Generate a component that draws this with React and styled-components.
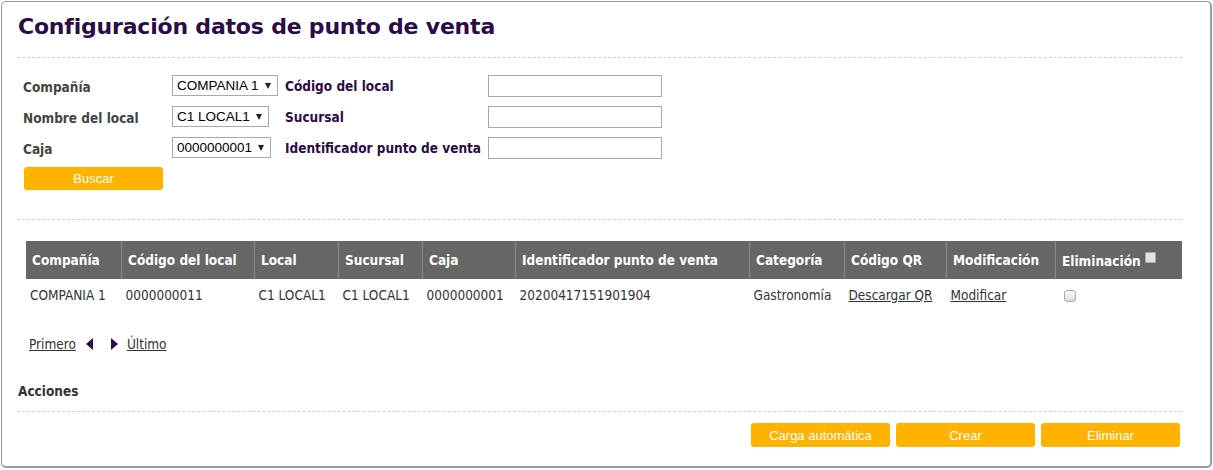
import React from "react";
import styled, { createGlobalStyle } from "styled-components";

const Global = createGlobalStyle`
  html, body {
    margin: 0;
    padding: 0;
    background: #fff;
  }
  body {
    font-family: "DejaVu Sans Condensed", "DejaVu Sans", sans-serif;
    font-size: 13.5px;
    color: #333;
  }
`;

const Panel = styled.div`
  margin: 1px 0 0 1px;
  width: 1211px;
  height: 467px;
  box-sizing: border-box;
  border: 1px solid #9a9a9a;
  border-right-width: 2px;
  border-bottom-width: 2px;
  border-radius: 5px;
  padding: 0 28px 0 15px;
  display: flex;
  flex-direction: column;
`;

const Title = styled.h1`
  margin: 0;
  padding: 12px 0 0 1px;
  height: 55px;
  box-sizing: border-box;
  font-family: "DejaVu Sans", sans-serif;
  font-size: 22px;
  font-weight: bold;
  color: #2c0b47;
  letter-spacing: -0.2px;
`;

const Divider = styled.div`
  border-top: 1px dashed #cfcfcf;
`;

const Form = styled.div`
  display: grid;
  grid-template-columns: 149px 113px 203px 174px;
  grid-auto-rows: 31px;
  align-items: center;
  padding: 12px 0 0 6px;
`;

const Label = styled.label`
  font-weight: bold;
  color: ${(p) => (p.$purple ? "#2c0b47" : "#444")};
  padding-top: ${(p) => (p.$purple ? 0 : 2)}px;
`;

const SelectBox = styled.div`
  justify-self: start;
  display: inline-flex;
  align-items: center;
  gap: 6px;
  height: 21px;
  box-sizing: border-box;
  border: 1px solid #a9a9a9;
  padding: 0 6px 0 4px;
  font-family: "Liberation Sans", Arial, sans-serif;
  font-size: 13.5px;
  color: #000;
  background: #fff;

  &::after {
    content: "";
    border-left: 3.5px solid transparent;
    border-right: 3.5px solid transparent;
    border-top: 6px solid #222;
  }
`;

const TextInput = styled.input`
  width: 174px;
  height: 22px;
  box-sizing: border-box;
  border: 1px solid #a9a9a9;
  padding: 0 4px;
`;

const OrangeButton = styled.button`
  width: ${(p) => p.$w || 139}px;
  height: ${(p) => p.$h || 24}px;
  background: #ffb300;
  border: none;
  border-radius: 3px;
  color: #fff;
  font-family: "Liberation Sans", Arial, sans-serif;
  font-size: 13px;
  padding: 0;
  cursor: pointer;
`;

const SearchRow = styled.div`
  padding: 4px 0 0 7px;
  height: 52px;
`;

const TableWrap = styled.div`
  padding: 21px 0 0 9px;
`;

const Table = styled.table`
  border-collapse: collapse;
  width: 1156px;
  th {
    background: #666;
    color: #fff;
    font-weight: bold;
    text-align: left;
    height: 38px;
    padding: 0 0 0 6px;
    border-left: 1px solid #8a8a8a;
    white-space: nowrap;
  }
  th:first-child {
    border-left: none;
  }
  td {
    height: 32px;
    padding: 0 0 0 4px;
    color: #333;
    white-space: nowrap;
  }
`;

const Check = styled.span`
  display: inline-block;
  width: ${(p) => p.$size || 12}px;
  height: ${(p) => p.$size || 12}px;
  box-sizing: border-box;
  border: 1px solid #aaa;
  border-radius: ${(p) => (p.$head ? 1 : 3)}px;
  background: ${(p) => (p.$head ? "#e2e2e2" : "linear-gradient(#fcfcfc, #dcdcdc)")};
  vertical-align: ${(p) => (p.$head ? "3px" : "-2px")};
  margin-left: 4px;
`;

const Link = styled.a`
  color: #333;
  text-decoration: underline;
`;

const Pager = styled.div`
  display: flex;
  align-items: center;
  gap: 9px;
  padding: 25px 0 0 12px;
  height: 40px;
  box-sizing: border-box;
`;

const Arrow = styled.span`
  width: 0;
  height: 0;
  border-top: 6px solid transparent;
  border-bottom: 6px solid transparent;
  ${(p) =>
    p.$left
      ? "border-right: 7px solid #2c0b47; margin: 0 9px 0 1px;"
      : "border-left: 7px solid #2c0b47;"}
`;

const SectionTitle = styled.div`
  font-weight: bold;
  color: #333;
  padding: 32px 0 0 1px;
  height: 60px;
  box-sizing: border-box;
`;

const Actions = styled.div`
  display: flex;
  justify-content: flex-end;
  gap: 6px;
  padding: 11px 2px 0 0;
`;

export default function App() {
  const rows = [
    ["COMPANIA 1", "0000000011", "C1 LOCAL1", "C1 LOCAL1", "0000000001", "20200417151901904", "Gastronomía"],
  ];
  return (
    <>
      <Global />
      <Panel>
        <Title>Configuración datos de punto de venta</Title>
        <Divider />
        <Form>
          <Label>Compañía</Label>
          <SelectBox>COMPANIA 1</SelectBox>
          <Label $purple>Código del local</Label>
          <TextInput />
          <Label>Nombre del local</Label>
          <SelectBox>C1 LOCAL1</SelectBox>
          <Label $purple>Sucursal</Label>
          <TextInput />
          <Label>Caja</Label>
          <SelectBox>0000000001</SelectBox>
          <Label $purple>Identificador punto de venta</Label>
          <TextInput />
        </Form>
        <SearchRow>
          <OrangeButton $h={23}>Buscar</OrangeButton>
        </SearchRow>
        <Divider />
        <TableWrap>
          <Table>
            <thead>
              <tr>
                <th style={{ width: 89 }}>Compañía</th>
                <th style={{ width: 126 }}>Código del local</th>
                <th style={{ width: 77 }}>Local</th>
                <th style={{ width: 77 }}>Sucursal</th>
                <th style={{ width: 86 }}>Caja</th>
                <th style={{ width: 227 }}>Identificador punto de venta</th>
                <th style={{ width: 88 }}>Categoría</th>
                <th style={{ width: 95 }}>Código QR</th>
                <th style={{ width: 102 }}>Modificación</th>
                <th>
                  Eliminación<Check $head $size={11} />
                </th>
              </tr>
            </thead>
            <tbody>
              {rows.map((r, i) => (
                <tr key={i}>
                  {r.map((c, j) => (
                    <td key={j}>{c}</td>
                  ))}
                  <td>
                    <Link>Descargar QR</Link>
                  </td>
                  <td>
                    <Link>Modificar</Link>
                  </td>
                  <td>
                    <Check />
                  </td>
                </tr>
              ))}
            </tbody>
          </Table>
        </TableWrap>
        <Pager>
          <Link>Primero</Link>
          <Arrow $left />
          <Arrow />
          <Link>Último</Link>
        </Pager>
        <SectionTitle>Acciones</SectionTitle>
        <Divider />
        <Actions>
          <OrangeButton>Carga automática</OrangeButton>
          <OrangeButton>Crear</OrangeButton>
          <OrangeButton>Eliminar</OrangeButton>
        </Actions>
      </Panel>
    </>
  );
}
